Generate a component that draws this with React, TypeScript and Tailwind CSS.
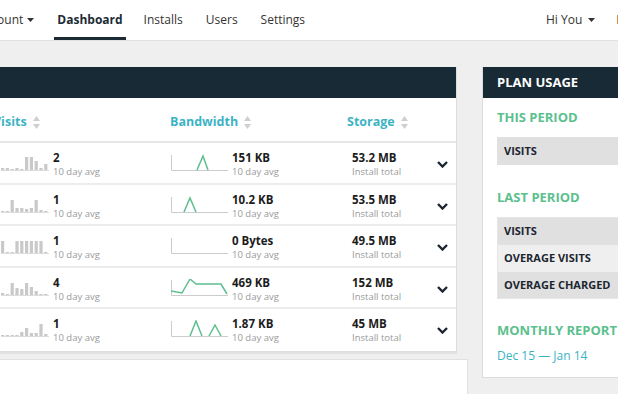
import React from "react";

const visitBars: number[][] = [
  [2, 2, 1, 2, 1, 13, 13, 9, 2, 6],
  [1, 1, 12, 4, 4, 3, 4, 12, 2, 1],
  [12, 1, 1, 12, 12, 12, 12, 12, 12, 1],
  [2, 1, 12, 7, 6, 12, 8, 4, 1, 1],
  [1, 1, 1, 1, 4, 8, 3, 3, 12, 2],
];

const bwLines: string[][] = [
  ["26,16 32,2 37,16"],
  ["13,16 19,2 25,16"],
  [],
  ["0,12 11,14 19,0 25,5 50,5 56,15"],
  ["19,16 25,1 31,16", "38,16 44,5 50,16"],
];

const rows = [
  { visits: "2", bw: "151 KB", storage: "53.2 MB" },
  { visits: "1", bw: "10.2 KB", storage: "53.5 MB" },
  { visits: "1", bw: "0 Bytes", storage: "49.5 MB" },
  { visits: "4", bw: "469 KB", storage: "152 MB" },
  { visits: "1", bw: "1.87 KB", storage: "45 MB" },
];

function Caret() {
  return (
    <svg width="7" height="4" viewBox="0 0 7 4" className="block">
      <polygon points="0,0 7,0 3.5,4" fill="#333" />
    </svg>
  );
}

function SortArrows() {
  return (
    <svg width="7" height="13" viewBox="0 0 7 13" className="block">
      <polygon points="3.5,0 7,5 0,5" fill="#cfcfcf" />
      <polygon points="0,8 7,8 3.5,13" fill="#cfcfcf" />
    </svg>
  );
}

function VisitSpark({ data }: { data: number[] }) {
  return (
    <svg width="48" height="18" viewBox="0 0 48 18" className="block shrink-0">
      {data.map((h, i) => (
        <rect key={i} x={i * 4.8} y={17 - h} width="3.2" height={h} fill="#c9c9c9" />
      ))}
      <line x1="0" y1="17.5" x2="48" y2="17.5" stroke="#dcdcdc" strokeWidth="1" />
    </svg>
  );
}

function BwSpark({ lines }: { lines: string[] }) {
  return (
    <svg width="57" height="18" viewBox="0 0 57 18" className="block shrink-0">
      <polyline points="0.5,1 0.5,16.5 57,16.5" fill="none" stroke="#cccccc" strokeWidth="1" />
      {lines.map((p, i) => (
        <polyline key={i} points={p} fill="none" stroke="#5cbf8e" strokeWidth="1.5" strokeLinejoin="miter" />
      ))}
    </svg>
  );
}

function Chevron() {
  return (
    <svg width="11" height="7" viewBox="0 0 11 7" className="block">
      <polyline points="1,1 5.5,5.5 10,1" fill="none" stroke="#1b2530" strokeWidth="2.4" />
    </svg>
  );
}

function ValueBlock({ value, sub }: { value: string; sub: string }) {
  return (
    <div className="flex flex-col mt-[8px] whitespace-nowrap">
      <div className="text-[11.5px] leading-[14px] font-bold text-[#1c1c1c]">{value}</div>
      <div className="text-[9.5px] leading-[13px] text-[#9a9a9a]">{sub}</div>
    </div>
  );
}

export default function App() {
  return (
    <div
      className="w-[618px] h-[394px] overflow-hidden bg-[#efefef] relative"
      style={{ fontFamily: '"Open Sans", "Liberation Sans", sans-serif' }}
    >
      {/* Top nav */}
      <div className="h-[41px] bg-white border-b border-[#e2e2e2] flex items-stretch whitespace-nowrap">
        <div className="flex items-center ml-[-22px] text-[12px] text-[#333]">
          <span>Account</span>
          <span className="ml-[4px]">
            <Caret />
          </span>
        </div>
        <div className="flex items-stretch ml-[20px]">
          <div className="px-[3px] flex items-center border-b-[3px] border-[#1b2b36] pt-[3px] text-[12px] font-bold text-[#1b2b36]">
            Dashboard
          </div>
        </div>
        <div className="flex items-center ml-[18px] text-[12px] text-[#333]">Installs</div>
        <div className="flex items-center ml-[23px] text-[12px] text-[#333]">Users</div>
        <div className="flex items-center ml-[23px] text-[12px] text-[#333]">Settings</div>
        <div className="flex-1" />
        <div className="w-[72px] shrink-0 flex items-center text-[12px] text-[#333]">
          <span>Hi You</span>
          <span className="ml-[6px]">
            <Caret />
          </span>
          <span className="ml-[21px] text-[#8a3e2c]">Log out</span>
        </div>
      </div>

      {/* Main */}
      <div className="flex items-start mt-[26px]">
        <div className="w-[468px] shrink-0 flex flex-col">
          {/* Installs card */}
          <div className="w-[458px] ml-[-1px] bg-white border border-[#dedede] border-t-0 shadow-[0_2px_0_#e2e2e2]">
            <div className="h-[31px] bg-[#172a35]" />
            <div className="h-[45px] border-b-2 border-[#e6e6e6] flex items-center pt-[5px] text-[12.5px] font-bold text-[#3cb3c4]">
              <div className="w-[170px] flex items-center">
                <span className="ml-[-7px]">Visits</span>
                <span className="ml-[6px]">
                  <SortArrows />
                </span>
              </div>
              <div className="w-[177px] flex items-center">
                <span>Bandwidth</span>
                <span className="ml-[6px]">
                  <SortArrows />
                </span>
              </div>
              <div className="flex items-center">
                <span>Storage</span>
                <span className="ml-[6px]">
                  <SortArrows />
                </span>
              </div>
            </div>
            {rows.map((r, i) => (
              <div
                key={i}
                className={`h-[41.6px] flex items-start ${i < rows.length - 1 ? "border-b-2 border-[#ececec]" : ""}`}
              >
                <div className="w-[171px] flex items-start">
                  <div className="mt-[10px] ml-[1px]">
                    <VisitSpark data={visitBars[i]} />
                  </div>
                  <div className="ml-[4px]">
                    <ValueBlock value={r.visits} sub="10 day avg" />
                  </div>
                </div>
                <div className="w-[177px] flex items-start">
                  <div className="mt-[11px]">
                    <BwSpark lines={bwLines[i]} />
                  </div>
                  <div className="ml-[4px]">
                    <ValueBlock value={r.bw} sub="10 day avg" />
                  </div>
                </div>
                <div className="w-[89px] pl-[4px]">
                  <ValueBlock value={r.storage} sub="Install total" />
                </div>
                <div className="mt-[18px]">
                  <Chevron />
                </div>
              </div>
            ))}
          </div>
          {/* Lower card */}
          <div className="mt-[7px] w-[469px] ml-[-1px] h-[40px] bg-white border border-[#e0e0e0]" />
        </div>

        {/* Plan usage card */}
        <div className="ml-[14px] w-[200px] shrink-0 bg-white border border-[#dcdcdc] border-t-0">
          <div className="h-[31px] bg-[#172a35] flex items-center pl-[14px] text-[13px] font-bold text-white">
            PLAN USAGE
          </div>
          <div className="px-[14px] pb-[13px]">
            <div className="mt-[10px] text-[13px] leading-[18px] font-bold text-[#5cbf8e]">THIS PERIOD</div>
            <div className="mt-[11px] h-[28px] bg-[#e0e0e0] flex items-center pl-[7px] text-[11px] font-bold text-[#1c2630]">
              VISITS
            </div>
            <div className="mt-[23px] text-[13px] leading-[18px] font-bold text-[#5cbf8e]">LAST PERIOD</div>
            <div className="mt-[11px] border border-[#e6e6e6] whitespace-nowrap">
              <div className="h-[27px] bg-[#e0e0e0] flex items-center pl-[6px] text-[11px] font-bold text-[#1c2630]">
                VISITS
              </div>
              <div className="h-[27px] bg-[#efefef] flex items-center pl-[6px] text-[11px] font-bold text-[#1c2630]">
                OVERAGE VISITS
              </div>
              <div className="h-[26px] bg-[#e0e0e0] flex items-center pl-[6px] text-[11px] font-bold text-[#1c2630]">
                OVERAGE CHARGED
              </div>
            </div>
            <div className="mt-[22px] text-[13px] leading-[18px] font-bold text-[#5cbf8e] whitespace-nowrap">
              MONTHLY REPORT
            </div>
            <div className="mt-[9px] text-[12px] leading-[16px] text-[#3cb3c4]">Dec 15 — Jan 14</div>
          </div>
        </div>
      </div>
    </div>
  );
}
